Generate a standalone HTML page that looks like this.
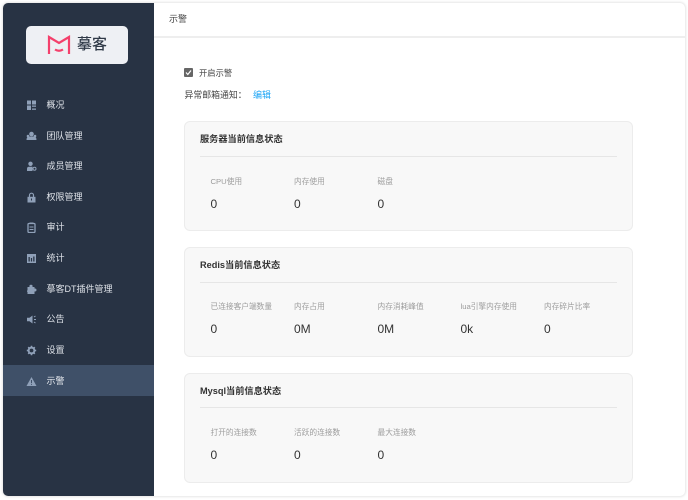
<!DOCTYPE html>
<html lang="zh"><head><meta charset="utf-8"><title>示警</title>
<style>
*{box-sizing:border-box;margin:0;padding:0}
html,body{width:688px;height:500px;overflow:hidden;background:#fff}
body{font-family:"Liberation Sans","Noto Sans CJK SC",sans-serif;color:#3a3a3a;position:relative}
.a{position:absolute;white-space:nowrap;line-height:14px}
#win{position:absolute;left:3px;top:3px;width:682px;height:493px;border-radius:5px;box-shadow:0 0 2px 1px #e6e6e6;background:#fff}
#side{position:absolute;left:3px;top:3px;width:151px;height:493px;background:#283344;border-radius:5px 0 0 5px}
#active{position:absolute;left:3px;top:365px;width:151px;height:31px;background:#3f5068}
#logo{position:absolute;left:26px;top:26px;width:102px;height:38px;background:#eef0f4;border-radius:5px}
.m{font-size:9px;color:#dfe3e9;left:46.5px}
.i{position:absolute;left:26px;width:11px;height:11px}
.card{position:absolute;left:184px;width:449px;height:110px;background:#f8f8f8;border:1px solid #ececec;border-radius:6px}
.hr{position:absolute;left:200px;width:417px;height:1px;background:#e6e6e6}
.t{font-size:9.2px;font-weight:700;color:#333;left:200px}
.l{font-size:7.7px;color:#9c9c9c}
.v{font-size:12px;color:#333}
</style></head><body>
<div id="win"></div>
<div id="side"></div>
<div id="active"></div>
<div id="logo"></div>
<svg class="a" style="left:47px;top:35px" width="24" height="20" viewBox="0 0 24 20" fill="none" stroke="#f4406c" stroke-width="2.200"><path d="M2 19V2L12 8L22 2V19"/><path d="M8 14.500Q12 17 16 14.500"/></svg>
<div class="a" style="left:77px;top:37px;font-size:15px;line-height:16px;font-weight:500;color:#2f3947">摹客</div>

<svg class="i" style="top:100px" viewBox="0 0 11 11" fill="#8fa0b8"><rect x="1" y="0.500" width="4" height="4"/><rect x="6" y="0.500" width="4" height="4"/><rect x="1" y="5.500" width="4" height="4.500"/><rect x="6" y="5.500" width="4" height="1.300"/><rect x="6" y="8.500" width="4" height="1.300"/></svg>
<div class="a m" style="top:98px">概况</div>
<svg class="i" style="top:131px" viewBox="0 0 11 11" fill="#8fa0b8"><circle cx="5.500" cy="3" r="2.300"/><circle cx="2" cy="5" r="1.300"/><circle cx="9" cy="5" r="1.300"/><path d="M.5 9Q.5 5.500 3 5.500H8Q10.500 5.500 10.500 9Z"/></svg>
<div class="a m" style="top:129px">团队管理</div>
<svg class="i" style="top:161px" viewBox="0 0 11 11"><circle cx="4.500" cy="2.800" r="2.200" fill="#8fa0b8"/><path d="M1 10V8Q1 5.800 3 5.800H6.500V10Z" fill="#8fa0b8"/><circle cx="8.500" cy="7.800" r="1.500" fill="none" stroke="#8fa0b8"/></svg>
<div class="a m" style="top:159px">成员管理</div>
<svg class="i" style="top:192px" viewBox="0 0 11 11"><path d="M3.500 5V3.200A2 2 0 0 1 7.500 3.200V5" fill="none" stroke="#8fa0b8" stroke-width="1.200"/><rect x="1.500" y="4.800" width="8" height="5.700" fill="#8fa0b8"/><rect x="5" y="6.500" width="1" height="2" fill="#283344"/></svg>
<div class="a m" style="top:190px">权限管理</div>
<svg class="i" style="top:222px" viewBox="0 0 11 11" fill="none" stroke="#8fa0b8"><rect x="2" y="1.500" width="7" height="9" rx="1" stroke-width="1.300"/><rect x="3.500" y="0.500" width="4" height="1.500" fill="#8fa0b8" stroke="none"/><path d="M3.500 5H7.500M3.500 7.500H7.500"/></svg>
<div class="a m" style="top:220px">审计</div>
<svg class="i" style="top:253px" viewBox="0 0 11 11" fill="#8fa0b8"><path fill-rule="evenodd" d="M1 1H10V10H1ZM2.500 4V8.500H3.800V4ZM4.900 5V8.500H6.100V5ZM7.200 3.500V8.500H8.500V3.500Z"/></svg>
<div class="a m" style="top:251px">统计</div>
<svg class="i" style="top:284px" viewBox="0 0 11 11" fill="#8fa0b8"><path d="M1.500 3H3.500Q3 .8 5 .8Q7 .8 6.500 3H8.500V4.500Q10.500 4.300 10.500 6T8.500 7.500V10H1.500V8Q.5 7.500 1.500 6Z"/></svg>
<div class="a m" style="top:282px">摹客DT插件管理</div>
<svg class="i" style="top:314px" viewBox="0 0 11 11" fill="#8fa0b8"><path d="M1 3.800H3.500L6.500 1.500V9.500L3.500 7.200H1Z"/><path d="M8 3L9.500 2M8 5.500H10M8 8L9.500 9" stroke="#8fa0b8" fill="none"/></svg>
<div class="a m" style="top:312px">公告</div>
<svg class="i" style="top:345px" viewBox="0 0 11 11"><circle cx="5.500" cy="5.500" r="2.900" fill="none" stroke="#8fa0b8" stroke-width="2"/><path d="M5.500 .8V2.500M5.500 8.500V10.200M.8 5.500H2.500M8.500 5.500H10.200M2.200 2.200L3.400 3.400M7.600 7.600L8.800 8.800M8.800 2.200L7.600 3.400M3.400 7.600L2.200 8.800" stroke="#8fa0b8" stroke-width="1.500"/></svg>
<div class="a m" style="top:343px">设置</div>
<svg class="i" style="top:376px" viewBox="0 0 11 11"><path d="M5.500 1L10.500 10H.5Z" fill="#8fa0b8"/><rect x="5" y="4" width="1" height="3" fill="#3f5068"/><rect x="5" y="7.800" width="1" height="1" fill="#3f5068"/></svg>
<div class="a m" style="top:374px;color:#e6e9ee">示警</div>

<div class="a" style="left:154px;top:36px;width:531px;height:1.500px;background:#eeeeee"></div>
<div class="a" style="left:169px;top:11.500px;font-size:9px;color:#444">示警</div>

<svg class="a" style="left:184px;top:68px" width="9" height="9" viewBox="0 0 9 9"><rect width="9" height="9" rx="1" fill="#666"/><path d="M2 4.500L3.800 6.500L7 2.500" fill="none" stroke="#fff" stroke-width="1.200"/></svg>
<div class="a" style="left:199px;top:66px;font-size:8.300px;color:#444">开启示警</div>
<div class="a" style="left:184.500px;top:88px;font-size:8.900px;color:#444">异常邮箱通知：</div>
<div class="a" style="left:253px;top:88px;font-size:9px;color:#1ea5f5">编辑</div>

<div class="card" style="top:121px"></div><div class="hr" style="top:156px"></div>
<div class="a t" style="top:132px">服务器当前信息状态</div>
<div class="a l" style="left:210.500px;top:174.500px">CPU使用</div>
<div class="a l" style="left:294px;top:174.500px">内存使用</div>
<div class="a l" style="left:377.500px;top:174.500px">磁盘</div>
<div class="a v" style="left:210.500px;top:196.500px">0</div>
<div class="a v" style="left:294px;top:196.500px">0</div>
<div class="a v" style="left:377.500px;top:196.500px">0</div>

<div class="card" style="top:247px"></div><div class="hr" style="top:282px"></div>
<div class="a t" style="top:258px">Redis当前信息状态</div>
<div class="a l" style="left:210.500px;top:300px">已连接客户端数量</div>
<div class="a l" style="left:294px;top:300px">内存占用</div>
<div class="a l" style="left:377.500px;top:300px">内存消耗峰值</div>
<div class="a l" style="left:460.500px;top:300px">lua引擎内存使用</div>
<div class="a l" style="left:544px;top:300px">内存碎片比率</div>
<div class="a v" style="left:210.500px;top:322px">0</div>
<div class="a v" style="left:294px;top:322px">0M</div>
<div class="a v" style="left:377.500px;top:322px">0M</div>
<div class="a v" style="left:460.500px;top:322px">0k</div>
<div class="a v" style="left:544px;top:322px">0</div>

<div class="card" style="top:372.500px"></div><div class="hr" style="top:407px"></div>
<div class="a t" style="top:384px">Mysql当前信息状态</div>
<div class="a l" style="left:210.500px;top:425.500px">打开的连接数</div>
<div class="a l" style="left:294px;top:425.500px">活跃的连接数</div>
<div class="a l" style="left:377.500px;top:425.500px">最大连接数</div>
<div class="a v" style="left:210.500px;top:447.500px">0</div>
<div class="a v" style="left:294px;top:447.500px">0</div>
<div class="a v" style="left:377.500px;top:447.500px">0</div>
</body></html>
